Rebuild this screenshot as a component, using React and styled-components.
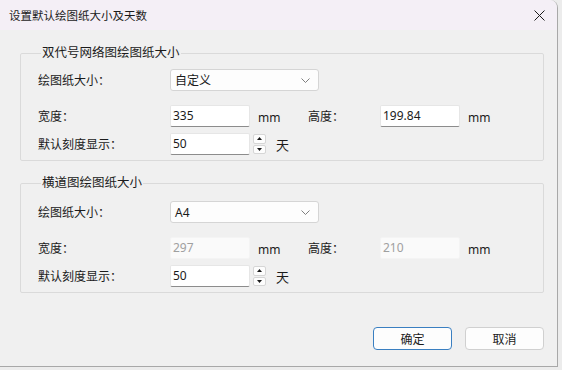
import React from "react";
import styled, { createGlobalStyle } from "styled-components";

const GlobalStyle = createGlobalStyle`
  html, body {
    margin: 0;
    padding: 0;
    background: #ececec;
  }
  body {
    font-family: "Noto Sans", "Noto Sans CJK SC", sans-serif;
    font-size: 12px;
    color: #1a1a1a;
  }
`;

const Dialog = styled.div`
  width: 557px;
  height: 366px;
  display: flex;
  flex-direction: column;
  background: #f0f0f0;
  border-right: 1px solid #a8a8a8;
  border-bottom: 1px solid #a8a8a8;
  border-top-right-radius: 8px;
  overflow: hidden;
`;

const TitleBar = styled.div`
  height: 30px;
  flex: none;
  display: flex;
  align-items: center;
  justify-content: space-between;
  padding: 0 10px 0 9px;
  background: #f4eff6;
  font-size: 11.5px;
  color: #1b1b1b;
`;

const CloseBtn = styled.button`
  width: 16px;
  height: 16px;
  padding: 0;
  border: none;
  background: transparent;
  display: flex;
  align-items: center;
  justify-content: center;
`;

const Body = styled.div`
  flex: 1;
  display: flex;
  flex-direction: column;
  padding: 15px 13px 0 20px;
`;

const Group = styled.fieldset`
  margin: 0 0 ${(p) => p.$gap || 0}px 0;
  width: 524px;
  box-sizing: border-box;
  padding: ${(p) => p.$top || 8}px 0 5px 17px;
  border: 1px solid #dadada;
  border-radius: 2px;
  display: flex;
  flex-direction: column;
`;

const Legend = styled.legend`
  padding: 0 1px;
  margin-left: 3px;
  font-size: 12.5px;
  line-height: 16px;
  color: #1b1b1b;
`;

const Row = styled.div`
  display: flex;
  align-items: center;
  height: 22px;
  margin-top: ${(p) => p.$mt || 0}px;
`;

const Label = styled.span`
  width: ${(p) => p.$w}px;
  flex: none;
  color: #1b1b1b;
`;

const Select = styled.div`
  width: 149px;
  height: 22px;
  box-sizing: border-box;
  display: flex;
  align-items: center;
  justify-content: space-between;
  padding: 0 8px 0 4px;
  background: #fdfdfd;
  border: 1px solid #d5d5d5;
  border-radius: 3px;
`;

const Input = styled.div`
  width: 80px;
  height: 22px;
  box-sizing: border-box;
  display: flex;
  align-items: center;
  padding: 0 0 2px 2px;
  background: ${(p) => (p.$disabled ? "#fafafa" : "#ffffff")};
  border: 1px solid ${(p) => (p.$disabled ? "#f4f4f4" : "#e6e6e6")};
  border-bottom-color: ${(p) => (p.$disabled ? "#f4f4f4" : "#8c8c8c")};
  border-radius: 2px;
  color: ${(p) => (p.$disabled ? "#a0a0a0" : "#1b1b1b")};
`;

const Unit = styled.span`
  width: ${(p) => p.$w || "auto"};
  margin-left: ${(p) => p.$ml}px;
  padding-top: ${(p) => p.$pt || 0}px;
  flex: none;
  font-size: ${(p) => p.$fs || 12}px;
  color: #1b1b1b;
`;

const Spinner = styled.div`
  margin-left: 3px;
  width: 13px;
  height: 20px;
  display: flex;
  flex-direction: column;
  gap: 1px;
`;

const SpinBtn = styled.div`
  flex: 1;
  display: flex;
  align-items: center;
  justify-content: center;
  background: #fdfdfd;
  border: 1px solid #d6d6d6;
  border-radius: 2px;
`;

const Footer = styled.div`
  display: flex;
  justify-content: flex-end;
  gap: 13px;
  margin-top: 34px;
  padding-right: 0;
`;

const Button = styled.button`
  width: 79px;
  height: 23px;
  box-sizing: border-box;
  font-family: inherit;
  font-size: 12px;
  color: #1b1b1b;
  background: #fdfdfd;
  border: 1px solid ${(p) => (p.$primary ? "#3a7fc1" : "#d0d0d0")};
  border-radius: 4px;
  padding: 0;
`;

const Chevron = () => (
  <svg width="9" height="5" viewBox="0 0 9 5">
    <path d="M0.5 0.5 L4.5 4.5 L8.5 0.5" fill="none" stroke="#707070" strokeWidth="0.9" />
  </svg>
);

const Arrow = ({ down }) => (
  <svg width="5" height="3" viewBox="0 0 5 3">
    <path d={down ? "M0 0 H5 L2.5 3 Z" : "M0 3 H5 L2.5 0 Z"} fill="#1b1b1b" />
  </svg>
);

function PaperGroup({ title, size, width, height, days, disabled, top, gap }) {
  return (
    <Group $top={top} $gap={gap}>
      <Legend>{title}</Legend>
      <Row>
        <Label $w={132}>绘图纸大小：</Label>
        <Select>
          <span>{size}</span>
          <Chevron />
        </Select>
      </Row>
      <Row $mt={14}>
        <Label $w={132}>宽度：</Label>
        <Input $disabled={disabled}>{width}</Input>
        <Unit $ml={8} $w="50px" $pt={3}>mm</Unit>
        <Label $w={72}>高度：</Label>
        <Input $disabled={disabled}>{height}</Input>
        <Unit $ml={8} $pt={3}>mm</Unit>
      </Row>
      <Row $mt={6}>
        <Label $w={132}>默认刻度显示：</Label>
        <Input>{days}</Input>
        <Spinner>
          <SpinBtn>
            <Arrow />
          </SpinBtn>
          <SpinBtn>
            <Arrow down />
          </SpinBtn>
        </Spinner>
        <Unit $ml={10} $fs={13}>天</Unit>
      </Row>
    </Group>
  );
}

export default function App() {
  return (
    <>
      <GlobalStyle />
      <Dialog>
        <TitleBar>
          <span>设置默认绘图纸大小及天数</span>
          <CloseBtn>
            <svg width="11" height="11" viewBox="0 0 11 11">
              <path d="M0.5 0.5 L10.5 10.5 M10.5 0.5 L0.5 10.5" stroke="#1b1b1b" strokeWidth="1" />
            </svg>
          </CloseBtn>
        </TitleBar>
        <Body>
          <PaperGroup
            title="双代号网络图绘图纸大小"
            size="自定义"
            width="335"
            height="199.84"
            days="50"
            top={8}
            gap={14}
          />
          <PaperGroup
            title="横道图绘图纸大小"
            size="A4"
            width="297"
            height="210"
            days="50"
            disabled
            top={10}
          />
          <Footer>
            <Button $primary>确定</Button>
            <Button>取消</Button>
          </Footer>
        </Body>
      </Dialog>
    </>
  );
}
